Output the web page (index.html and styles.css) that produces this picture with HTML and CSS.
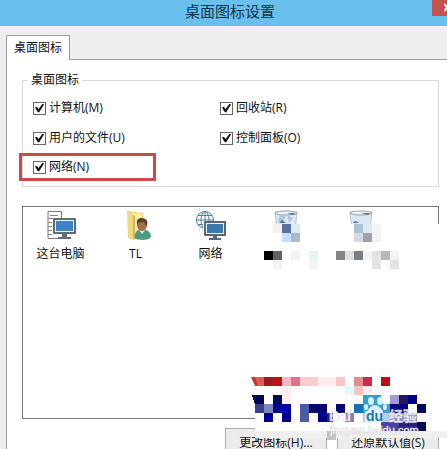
FILE: index.html
```html
<!DOCTYPE html>
<html lang="zh-CN">
<head>
<meta charset="utf-8">
<title>桌面图标设置</title>
<link rel="stylesheet" href="styles.css">
</head>
<body>
<header class="titlebar">
  <h1 class="title">桌面图标设置</h1>
  <button class="close" type="button" aria-label="关闭"><svg width="8" height="16" viewBox="0 0 8 16"><path d="M0 4L7 11M7 4L0 11" stroke="#fff" stroke-width="2"/></svg></button>
</header>
<nav class="tabs"><button class="tab" type="button">桌面图标</button></nav>
<main class="panel">
  <fieldset class="group">
    <legend>桌面图标</legend>
    <div class="options">
      <label class="option"><input type="checkbox" checked>计算机(M)</label>
      <label class="option"><input type="checkbox" checked>回收站(R)</label>
      <label class="option"><input type="checkbox" checked>用户的文件(U)</label>
      <label class="option"><input type="checkbox" checked>控制面板(O)</label>
      <label class="option marked"><input type="checkbox" checked>网络(N)</label>
    </div>
  </fieldset>
  <section class="icons">
    <figure class="item">
      <svg width="32" height="32" viewBox="0 0 32 32">
        <path d="M3 1.500H16.500V8M3 1.500V28.500H15" fill="#fff" stroke="#777" />
        <path d="M5 5.500H13M3 8.500H8M3 12.500H7M3 16.500H7M3 20.500H7M3 24.500H7" stroke="#888"/>
        <rect x="8" y="8" width="23" height="16" rx="1" fill="#5f6e70"/>
        <rect x="10" y="10" width="19" height="12" fill="#e8f1f5"/>
        <rect x="11" y="11" width="17" height="10" fill="#3d82c4"/>
        <path d="M17 24h5v3h4v2H13v-2h4z" fill="#5f6e70"/>
      </svg>
      <figcaption>这台电脑</figcaption>
    </figure>
    <figure class="item">
      <svg width="32" height="32" viewBox="0 0 32 32">
        <path d="M8 1L23 3V27L9 29z" fill="#efd778"/>
        <path d="M12 3L22 4V23L12 26z" fill="#fbefac"/>
        <path d="M7 1L13 5V30L8 28z" fill="#f0da80"/>
        <path d="M13 5L15 6V28L13 30z" fill="#d2b35a"/>
        <path d="M15 29C14 22 17 20 22 19C28 19 31 23 31 27C28 31 20 30 15 29z" fill="#4c9c83"/>
        <path d="M19 20L22 24L26 19z" fill="#dceadf"/>
        <ellipse cx="22" cy="15" rx="5" ry="6" fill="#a57047"/>
        <path d="M17 13C16 8 22 7 25 9C28 10 28 14 26 16L24 12C21 13 19 11 17 15z" fill="#59412f"/>
      </svg>
      <figcaption>TL</figcaption>
    </figure>
    <figure class="item">
      <svg width="32" height="32" viewBox="0 0 32 32">
        <g fill="none" stroke="#4b83a5"><circle cx="10" cy="10" r="8.500"/><ellipse cx="10" cy="10" rx="4" ry="8.500"/><path d="M10 1V18M2 10H18M3 5.500H17M3 14.500H10"/></g>
        <rect x="8" y="11" width="23" height="16" rx="1" fill="#fff"/>
        <rect x="9" y="11" width="22" height="15" rx="1" fill="#5d686e"/>
        <rect x="11" y="13" width="18" height="11" fill="#e8f1f5"/>
        <rect x="12" y="14" width="16" height="9" fill="#3d78ac"/>
        <path d="M18 26h4v2h4v2H14v-2h4z" fill="#5d686e"/>
      </svg>
      <figcaption>网络</figcaption>
    </figure>
    <figure class="item" aria-hidden="true">
      <svg width="32" height="32" viewBox="0 0 32 32">
        <path d="M5 2H27L24 30H8z" fill="#dce8f1" stroke="#b5c4cd"/>
        <ellipse cx="16" cy="3" rx="11" ry="2" fill="#edf2f4" stroke="#929fa6"/>
        <path d="M10 4L16 7L12 13L8 11zM17 5L23 8L19 13z" fill="#aec7de"/><path d="M9 13L12 10L16 13z" fill="#526f96"/><path d="M17 3L25 3L23 5z" fill="#647078"/>
      </svg>
    </figure>
    <figure class="item" aria-hidden="true">
      <svg width="32" height="32" viewBox="0 0 32 32">
        <path d="M5 2H27L24 30H8z" fill="#dce9f5" stroke="#bdcbd3"/>
        <ellipse cx="16" cy="3" rx="11" ry="2" fill="#edf3f5" stroke="#929fa6"/>
        <path d="M8 13Q10 9 14 13z" fill="#607c9c"/><path d="M16 3L25 3L23 5z" fill="#647078"/>
      </svg>
    </figure>
  </section>
  <div class="actions">
    <button class="action" type="button">更改图标(H)...</button>
    <button class="action" type="button">还原默认值(S)</button>
  </div>
</main>
<svg class="mosaic" viewBox="255 224 192 225" width="192" height="225" aria-hidden="true">
  <path fill="#fff" d="M255 224H447V431H255z"/>
  <path fill="#f0f0f0" d="M255 431H447V438H255z"/>
  <g shape-rendering="crispEdges">
    <path fill="#f3f3f3" d="M273 224h9v9h-9zM372 224h9v9h-9zM372 233h9v9h-9zM273 260h9v9h-9zM309 260h9v9h-9zM363 251h9v9h-9zM390 251h9v9h-9z"/>
    <path fill="#5870a2" d="M282 224h9v9h-9z"/><path fill="#d9eaf3" d="M291 224h9v9h-9z"/><path fill="#c6dcfb" d="M282 233h9v9h-9z"/><path fill="#aabac6" d="M291 233h9v9h-9z"/>
    <path fill="#a9c2d1" d="M354 224h9v9h-9z"/><path fill="#dce9ef" d="M363 224h9v9h-9z"/><path fill="#d6d8df" d="M354 233h9v9h-9z"/><path fill="#9fa1a6" d="M363 233h9v9h-9z"/>
    <path fill="#000" d="M264 251h9v9h-9z"/><path fill="#626265" d="M273 251h9v9h-9z"/><path fill="#f0f2f4" d="M291 251h9v9h-9z"/><path fill="#e5f2f6" d="M309 251h9v9h-9z"/>
    <path fill="#858583" d="M336 251h9v9h-9z"/><path fill="#dfdfdf" d="M345 251h9v9h-9z"/><path fill="#787e81" d="M354 251h9v9h-9z"/><path fill="#e3e4e1" d="M372 251h9v9h-9zM372 260h9v9h-9zM390 260h9v9h-9z"/><path fill="#b3b9ba" d="M381 251h9v9h-9z"/>

    <path fill="#d9605b" d="M255 377h9v9h-9z"/><path fill="#9c1921" d="M264 377h9v9h-9z"/><path fill="#bd1010" d="M273 377h9v9h-9z"/><path fill="#f8b9c7" d="M282 377h9v9h-9z"/><path fill="#df7388" d="M291 377h9v9h-9z"/><path fill="#fbcbd2" d="M300 377h18v9h-18z"/><path fill="#ffeeed" d="M318 377h18v9h-18zM282 386h9v18h-9zM363 386h9v9h-9z"/><path fill="#f9c5c3" d="M336 377h9v9h-9zM354 386h9v9h-9z"/><path fill="#de8f8f" d="M354 377h9v9h-9z"/><path fill="#cc2c4b" d="M363 377h9v9h-9z"/><path fill="#b80c17" d="M381 377h9v9h-9z"/><path fill="#e0fafa" d="M345 386h9v9h-9z"/>

    <path fill="#000958" d="M255 395h9v9h-9zM273 395h9v9h-9zM417 404h9v9h-9zM417 422h9v9h-9z"/><path fill="#000958" d="M264 395h-12l3 9h9z"/>
    <path fill="#394289" d="M255 404h9v9h-9z"/><path fill="#7b88bf" d="M264 404h9v9h-9z"/>
    <path fill="#00008f" d="M273 404h9v9h-9zM264 413h9v9h-9zM282 413h9v9h-9zM318 413h9v9h-9zM408 395h9v9h-9z"/><path fill="#0000ad" d="M282 404h9v9h-9z"/>
    <path fill="#4b5ba6" d="M300 404h9v18h-9z"/><path fill="#060675" d="M309 404h18v9h-18zM336 404h9v9h-9zM390 404h18v9h-18z"/><path fill="#26267b" d="M327 413h6v9h-6z"/>
    <path fill="#319fcd" d="M363 395h18v9h-18z"/><path fill="#a39acd" d="M390 395h9v9h-9z"/><path fill="#211a61" d="M399 395h9v9h-9z"/>
    <path fill="#1b70af" d="M354 404h9v9h-9z"/><path fill="#3b9fd0" d="M363 404h27v9h-27z"/>
    <path fill="#8181b1" d="M345 413h9v9h-9z"/><path fill="#b8cbe8" d="M363 413h27v9h-27z"/><path fill="#8582be" d="M390 413h27v9h-27z"/><path fill="#4942a3" d="M381 422h18v9h-18z"/><path fill="#282177" d="M399 422h18v9h-18z"/>
    <path fill="#c4c4c4" d="M327 431h9v9h-9z"/><path fill="#fff" d="M328 440h9v9h-9z"/>
  </g>
  <path fill="#c83331" d="M251 377h4l3 9h-3z"/>
  <g fill="#d9effa"><ellipse cx="371" cy="401" rx="3" ry="4"/><ellipse cx="380" cy="401" rx="3" ry="4"/><ellipse cx="366" cy="407" rx="2" ry="3"/><ellipse cx="385" cy="407" rx="2" ry="3"/><path d="M375 405C371 405 366 411 367 414C370 417 380 417 383 414C384 411 379 405 375 405z"/></g>
  <rect x="365" y="411" width="17" height="12" rx="2" fill="#e4f2fb"/>
  <g class="watermark"><text x="329" y="421" class="brand light">Bai</text><text x="366" y="421" class="brand blue">du</text><text x="389" y="421" class="brand light">经验</text><text x="330" y="434" class="address">jingyan.baidu.com</text></g>
</svg>
</body>
</html>
```
FILE: styles.css
```css
* { box-sizing: border-box; }
html { height: 100%; overflow: hidden; }
body {
  margin: 0;
  min-height: 100%;
  position: relative;
  overflow: hidden;
  background: #eeeeee;
  color: #111;
  font: 12px/16px "Open Sans", "Noto Sans CJK SC", sans-serif;
}
button { font: inherit; color: inherit; }
.titlebar {
  display: flex;
  justify-content: flex-end;
  height: 26px;
  background: #69c0ee;
}
.title {
  flex: 1;
  margin: 0;
  padding-left: 28px;
  text-align: center;
  font-size: 15px;
  line-height: 22px;
  font-weight: 400;
  color: #123347;
}
.close {
  width: 15px;
  height: 16px;
  padding: 0 0 0 12px;
  border: 0;
  overflow: hidden;
  background: #c75050;
}
.close svg { display: block; }
.tabs { display: flex; padding: 9px 0 0 6px; }
.tab {
  position: relative;
  z-index: 1;
  width: 64px;
  height: 25px;
  margin-bottom: -1px;
  padding: 0;
  border: 1px solid #a0a0a4;
  border-bottom: 0;
  background: #fff;
}
.panel {
  margin-left: 6px;
  padding: 12px 8px 0 15px;
  border: 1px solid #a0a0a4;
  border-width: 1px 0 0 1px;
  background: #fff;
}
.group {
  margin: 0 0 19px;
  padding: 0 0 3px 10px;
  border: 1px solid #d8d8d8;
}
.group legend { margin-left: -5px; padding: 0 3px; }
.options {
  display: grid;
  grid-template-columns: 187px 1fr;
  grid-auto-rows: 30px;
  padding-top: 5px;
}
.option { display: flex; align-items: center; gap: 3px; line-height: 18px; }
.option input {
  appearance: none;
  width: 13px;
  height: 13px;
  margin: 0;
  border: 1px solid #666;
  background: #fff;
  display: grid;
  place-items: center;
}
.option input:checked::before {
  content: "";
  width: 9px;
  height: 9px;
  background: #111;
  clip-path: polygon(0 45%, 20% 35%, 40% 60%, 85% 0, 100% 12%, 45% 100%, 30% 95%);
}
.marked {
  width: 137px;
  height: 28px;
  margin: 0 0 2px -14px;
  padding-left: 11px;
  border: 3px solid #c94a49;
}
.icons {
  display: grid;
  grid-template-columns: repeat(5, 75px);
  align-content: start;
  min-height: 213px;
  padding-top: 3px;
  border: 1px solid #77777b;
}
.item { margin: 0; text-align: center; }
.item svg { display: block; margin: 0 auto 4px; }
.actions {
  display: flex;
  justify-content: flex-end;
  gap: 10px;
  padding-top: 9px;
}
.action {
  min-width: 102px;
  height: 30px;
  padding: 0;
  border: 1px solid #acacac;
  background: #ececec;
}
.mosaic {
  position: absolute;
  top: 224px;
  left: 255px;
  overflow: visible;
  pointer-events: none;
}
.watermark { font-family: "Liberation Sans", "Noto Sans CJK SC", sans-serif; }
.brand { font-size: 14px; font-weight: 700; }
.light { fill: #fff; fill-opacity: 0.8; stroke: #c4c4d4; stroke-opacity: 0.5; stroke-width: 1px; paint-order: stroke; }
.blue { fill: #1b78b7; }
.address { font-size: 11px; fill: #fff; fill-opacity: 0.8; stroke: #c9c9cd; stroke-opacity: 0.6; stroke-width: 1px; paint-order: stroke; }
```
